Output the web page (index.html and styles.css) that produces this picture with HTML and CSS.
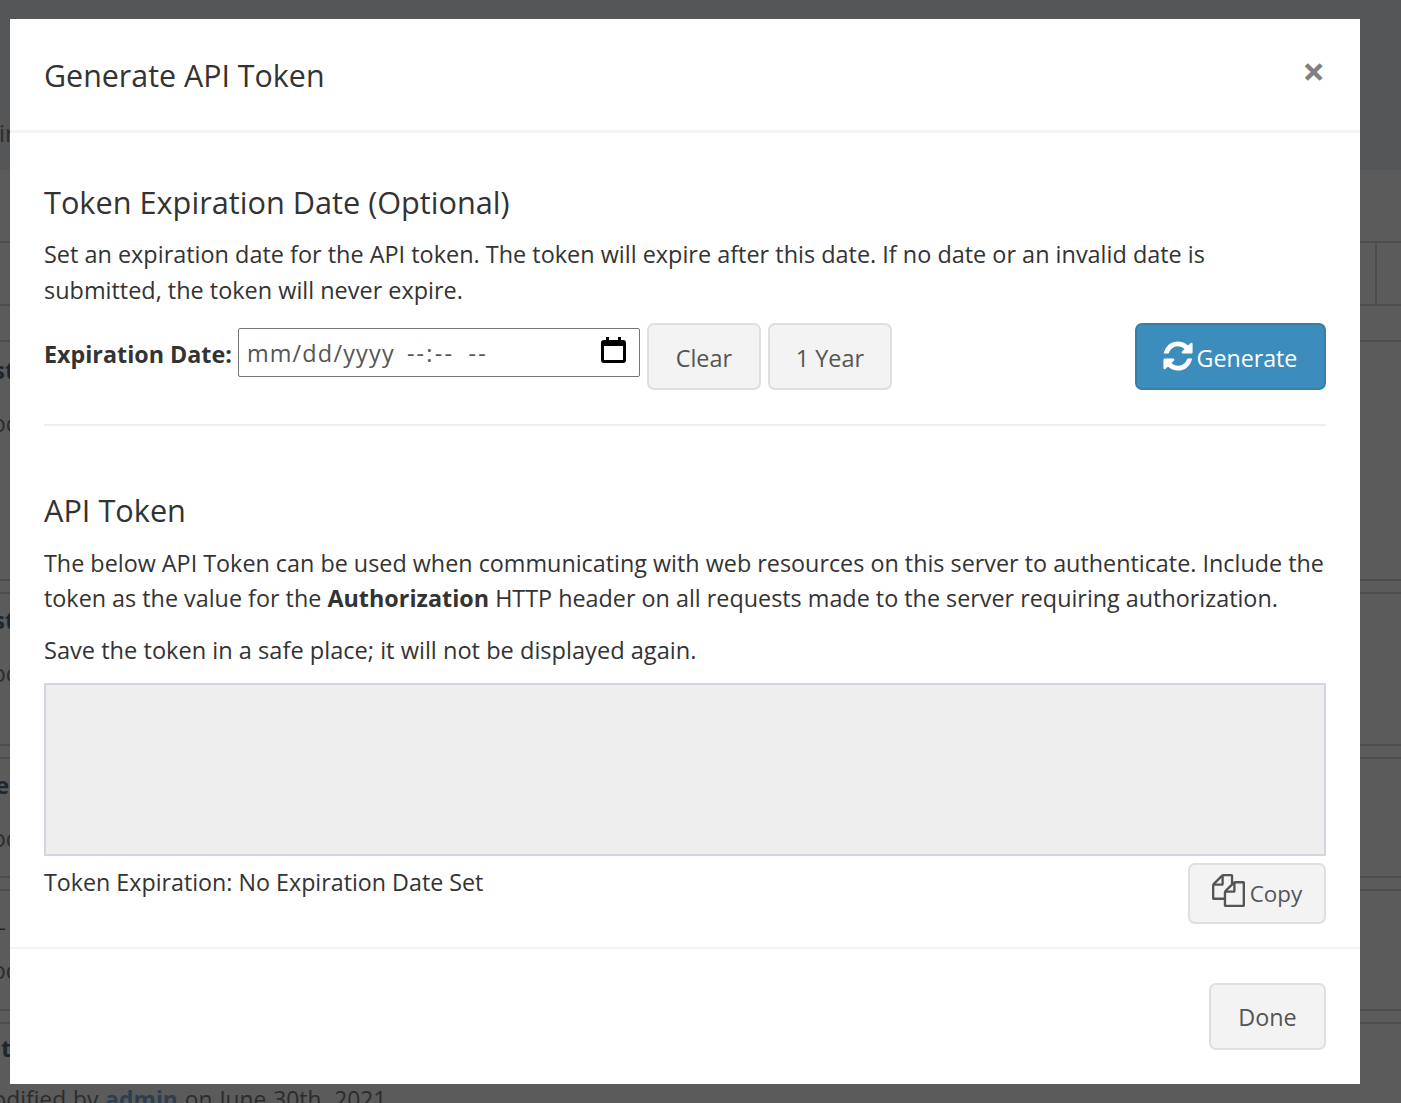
FILE: index.html

```html
<!DOCTYPE html>
<html>
<head>
<meta charset="utf-8">
<title>Generate API Token</title>
<link rel="stylesheet" href="styles.css">
</head>
<body>
<div class="page">
	<div class="top-bar"><span class="crumb">ir</span></div>
	<div class="sub-bar"></div>
	<div class="head-row"><div class="head-end"></div></div>
	<div class="gap-row"></div>
	<div class="item item-a"><b>st</b><span>oc</span></div>
	<div class="item item-b"><b>st</b><span>oc</span></div>
	<div class="item item-c"><b>e</b><span>oc</span></div>
	<div class="item item-d"><b>_</b><span>oc</span></div>
	<div class="item item-e"><b>t</b></div>
	<p class="modified">Modified by <b>admin</b> on June 30th, 2021</p>
</div>

<div class="modal">
	<div class="modal-header">
		<h4>Generate API Token</h4>
		<span class="close">&times;</span>
	</div>
	<div class="modal-body">
		<h3>Token Expiration Date (Optional)</h3>
		<p class="intro">Set an expiration date for the API token. The token will expire after this date. If no date or an invalid date is submitted, the token will never expire.</p>
		<div class="date-row">
			<label>Expiration Date:</label>
			<div class="date-input">
				<span class="date-part">mm/dd/yyyy</span>
				<span class="time-part">--:-- --</span>
				<svg class="icon-cal" viewBox="0 0 25 26"><path d="M5 0h3v3h9V0h3v3h2a3 3 0 0 1 3 3v17a3 3 0 0 1-3 3H3a3 3 0 0 1-3-3V6a3 3 0 0 1 3-3h2zM3 9v14h19V9z"/></svg>
			</div>
			<button class="btn btn-clear">Clear</button>
			<button class="btn btn-year">1 Year</button>
			<button class="btn btn-primary">
				<svg class="icon-refresh" viewBox="0 0 1792 1792"><path d="M1639 1056q0 5-1 7-64 268-268 434.5t-478 166.5q-146 0-282.5-55t-243.5-157l-129 129q-19 19-45 19t-45-19-19-45v-448q0-26 19-45t45-19h448q26 0 45 19t19 45-19 45l-137 137q71 66 161 102t187 36q134 0 250-65t186-179q11-17 53-117 8-23 30-23h192q13 0 22.5 9.5t9.5 22.5zm25-800v448q0 26-19 45t-45 19h-448q-26 0-45-19t-19-45 19-45l138-138q-148-137-349-137-134 0-250 65t-186 179q-11 17-53 117-8 23-30 23h-199q-13 0-22.5-9.5t-9.5-22.5v-7q65-268 270-434.5t480-166.5q146 0 284 55.5t245 156.5l130-129q19-19 45-19t45 19 19 45z"/></svg>
				Generate
			</button>
		</div>
		<hr>
		<h3 class="token-title">API Token</h3>
		<p class="usage">The below API Token can be used when communicating with web resources on this server to authenticate. Include the token as the value for the <b>Authorization</b> HTTP header on all requests made to the server requiring authorization.</p>
		<p class="save">Save the token in a safe place; it will not be displayed again.</p>
		<textarea class="token-box" disabled></textarea>
		<div class="token-foot">
			<span>Token Expiration: No Expiration Date Set</span>
			<button class="btn btn-copy">
				<svg class="icon-copy" viewBox="0 0 1792 1792"><path d="M1696 384q40 0 68 28t28 68v1216q0 40-28 68t-68 28h-960q-40 0-68-28t-28-68v-288h-544q-40 0-68-28t-28-68v-672q0-40 20-88t48-76l408-408q28-28 76-48t88-20h416q40 0 68 28t28 68v328q68-40 128-40h416zm-544 213l-299 299h299v-299zm-640-384l-299 299h299v-299zm196 647l316-316v-416h-384v416q0 40-28 68t-68 28h-416v640h512v-256q0-40 20-88t48-76zm956 804v-1152h-384v416q0 40-28 68t-68 28h-416v640h896z"/></svg>
				Copy
			</button>
		</div>
	</div>
	<div class="modal-footer">
		<button class="btn btn-done">Done</button>
	</div>
</div>
</body>
</html>
```

FILE: styles.css

```css
* {margin:0; padding:0; box-sizing:border-box;}
html, body {height:1103px; overflow:hidden;}
body {background:#5b5b5b; font-family:"Open Sans","Noto Sans",sans-serif; color:#333; position:relative;}

/* page behind the modal */
.page {height:1103px; overflow:hidden; color:#23272b;}
.top-bar {height:170px; background:#555658; padding-top:110px; font-size:24px; line-height:46px;}
.crumb {display:block; margin-left:-1px; color:#2c2c2c;}
.sub-bar {height:71px;}
.head-row {height:65px; border-top:2px solid #4d4d4d; border-bottom:2px solid #4d4d4d; display:flex; justify-content:flex-end;}
.head-end {width:26px; border-left:2px solid #4d4d4d;}
.gap-row {height:36px; border-bottom:2px solid #4d4d4d;}
.item {border-bottom:2px solid #4d4d4d; position:relative; margin-top:13px; padding-top:8px;}
.item b {display:block; margin-left:-5px; font-size:24px; line-height:36px; color:#1c2730;}
.item span {display:block; margin-left:-8px; margin-top:17px; font-size:23px; line-height:36px; color:#2c2c2c;}
.item::after {content:""; position:absolute; left:0; right:0; bottom:-15px; height:2px; background:#4d4d4d;}
.item-a {height:239px; margin-top:0; padding-top:10px;}
.item-a b, .item-b b {margin-left:-7px;}
.item-b {height:152px;}
.item-c {height:119px;}
.item-d {height:120px;}
.item-e {height:42px; border:0; padding-top:6px;}
.item-e b {margin-left:1px;}
.item-e::after {display:none;}
.modified {margin-top:16px; margin-left:-28px; font-size:22.8px; word-spacing:1px; line-height:36px; color:#2c2c2c;}
.modified b {color:#2c3e50;}

/* modal */
.modal {position:absolute; left:10px; top:19px; width:1350px; background:#fff; color:#333;}
.modal-header {height:114px; padding:0 34px; border-bottom:3px solid #f4f4f4; position:relative;}
.modal-header h4 {font-size:30.4px; font-weight:500; line-height:114px;}
.close {position:absolute; right:35px; top:27px; font-size:40px; line-height:50px; font-weight:700; color:#808080;}
.modal-body {padding:0 34px;}
h3 {font-size:30.7px; font-weight:500; line-height:40px; margin-top:49px;}
.intro {font-size:23.45px; line-height:36px; margin-top:14px;}
.date-row {display:flex; align-items:flex-start; margin-top:15px;}
.date-row label {font-size:23.3px; font-weight:700; line-height:36px; margin-top:13px; margin-right:6px;}
.date-input {display:flex; align-items:center; width:402px; height:49px; margin-top:5px; padding:0 13px 0 8px; border:1px solid #767676; border-radius:2px; font-size:23.4px; color:#555;}
.date-part {width:160px; letter-spacing:1.2px;}
.time-part {letter-spacing:2.2px; word-spacing:6px;}
.icon-cal {width:25px; height:26px; margin-left:auto; margin-top:-5px; fill:#000;}

.btn {display:block; background:#f3f3f3; border:2px solid #dfdfdf; border-radius:7px; font:23.4px/1 "Open Sans",sans-serif; color:#555;}
.btn-clear {width:114px; height:67px; margin-left:7px; padding-top:4px;}
.btn-year {width:124px; height:67px; margin-left:7px; padding-top:4px;}
.btn-primary {width:191px; height:67px; margin-left:auto; padding:4px 3px 0 0; background:#3c8dbc; border-color:#367fa9; color:#fff; font-size:23.2px; display:flex; align-items:center; justify-content:center;}
.icon-refresh {width:34px; height:34px; fill:#fff; margin-right:2px; margin-top:-6px;}

hr {border:0; border-top:2px solid #eee; margin-top:34px;}
.token-title {margin-top:64px;}
.usage {font-size:23.35px; line-height:35px; margin-top:16px;}
.save {font-size:23.6px; line-height:35px; margin-top:17px;}
.token-box {display:block; width:100%; height:173px; margin-top:15px; background:#eee; border:2px solid #d2d6de; resize:none;}
.token-foot {display:flex; justify-content:space-between; align-items:flex-start; margin-top:7px; font-size:23.25px; line-height:36px;}
.token-foot span {margin-top:1px;}
.btn-copy {width:138px; height:61px; padding-top:2px; font-size:22.4px; display:flex; align-items:center; justify-content:center;}
.icon-copy {width:33px; height:33px; fill:#555; margin-right:5px; margin-top:-8px;}

.modal-footer {margin-top:23px; border-top:2px solid #f4f4f4; height:137px; padding:34px 34px 0; display:flex; justify-content:flex-end;}
.btn-done {width:117px; height:67px; padding-top:3px;}
```
